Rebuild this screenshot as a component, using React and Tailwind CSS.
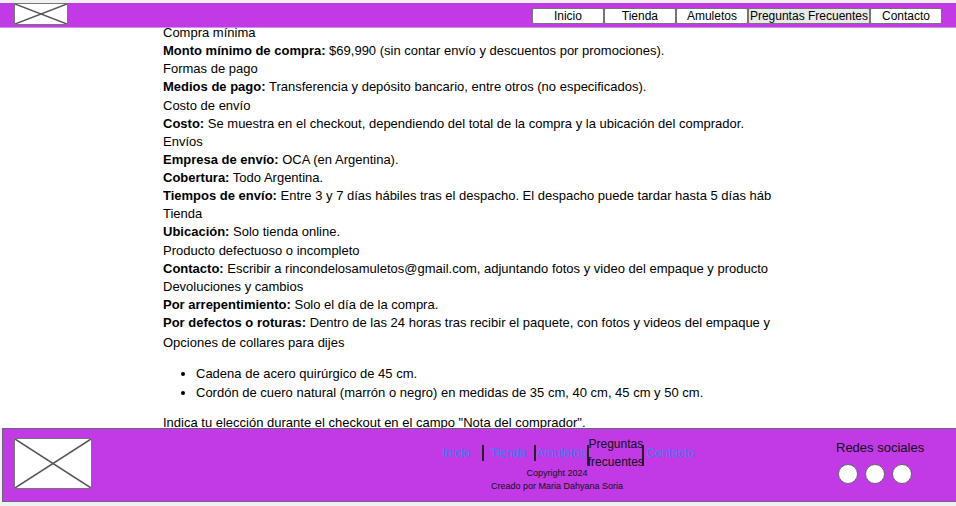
import React from "react";

const LogoBox = ({ className }) => (
  <div className={`bg-white border border-[#777] shrink-0 ${className}`}>
    <svg width="100%" height="100%" preserveAspectRatio="none" viewBox="0 0 100 100">
      <line x1="0" y1="0" x2="100" y2="100" stroke="#555" strokeWidth="1.5" vectorEffect="non-scaling-stroke" />
      <line x1="100" y1="0" x2="0" y2="100" stroke="#555" strokeWidth="1.5" vectorEffect="non-scaling-stroke" />
    </svg>
  </div>
);

const navItems = ["Inicio", "Tienda", "Amuletos", "Preguntas Frecuentes", "Contacto"];

const rows = [
  { t: "Compra mínima" },
  { b: "Monto mínimo de compra:", t: " $69,990 (sin contar envío y descuentos por promociones)." },
  { t: "Formas de pago" },
  { b: "Medios de pago:", t: " Transferencia y depósito bancario, entre otros (no especificados)." },
  { t: "Costo de envío" },
  { b: "Costo:", t: " Se muestra en el checkout, dependiendo del total de la compra y la ubicación del comprador." },
  { t: "Envíos" },
  { b: "Empresa de envío:", t: " OCA (en Argentina)." },
  { b: "Cobertura:", t: " Todo Argentina." },
  { b: "Tiempos de envío:", t: " Entre 3 y 7 días hábiles tras el despacho. El despacho puede tardar hasta 5 días háb" },
  { t: "Tienda" },
  { b: "Ubicación:", t: " Solo tienda online." },
  { t: "Producto defectuoso o incompleto" },
  { b: "Contacto:", t: " Escribir a rincondelosamuletos@gmail.com, adjuntando fotos y video del empaque y producto" },
  { t: "Devoluciones y cambios" },
  { b: "Por arrepentimiento:", t: " Solo el día de la compra." },
  { b: "Por defectos o roturas:", t: " Dentro de las 24 horas tras recibir el paquete, con fotos y videos del empaque y" },
];

export default function App() {
  return (
    <div className="h-[506px] w-[956px] overflow-hidden bg-[#f0f1f3] pt-[3px] flex flex-col font-['Liberation_Sans',Arial,sans-serif] text-black">
      <header className="h-[25px] shrink-0 bg-[#c13ae6] border-b border-[#d48eec] flex items-start justify-between">
        <LogoBox className="ml-[14px] w-[54px] h-[22px]" />
        <nav className="flex mt-[5px] mr-[14px]">
          {navItems.map((item) => (
            <button
              key={item}
              className={`h-[16px] border border-[#767676] rounded-[2px] text-[12px] leading-[14px] text-black ${
                item === "Preguntas Frecuentes" ? "bg-[#e9e9e9] px-[1px]" : "bg-white w-[72px]"
              }`}
            >
              {item}
            </button>
          ))}
        </nav>
      </header>

      <main className="flex-1 bg-white overflow-hidden">
        <div className="ml-[163px] w-[608px] mt-[-4px] overflow-hidden whitespace-nowrap text-[13px]">
          {rows.map((r, i) => (
            <p key={i} className="leading-[18.13px]">
              {r.b && <strong className="font-bold">{r.b}</strong>}
              {r.t}
            </p>
          ))}
          <p className="leading-[18px] mt-[2px]">Opciones de collares para dijes</p>
          <ul className="list-disc pl-[33px] mt-[12px] mb-[12px] leading-[19px]">
            <li>Cadena de acero quirúrgico de 45 cm.</li>
            <li>Cordón de cuero natural (marrón o negro) en medidas de 35 cm, 40 cm, 45 cm y 50 cm.</li>
          </ul>
          <p className="leading-[18px]">Indica tu elección durante el checkout en el campo "Nota del comprador".</p>
        </div>
      </main>

      <footer className="h-[74px] shrink-0 ml-[2px] w-[960px] bg-[#c13ae6] border border-[#6f6477] flex items-start">
        <LogoBox className="ml-[11px] mt-[9px] w-[78px] h-[51px]" />

        <div className="ml-[345px] mt-[9px] w-[240px] shrink-0 flex flex-col">
          <div className="h-[29px] flex items-center pl-[5px] text-[12px] whitespace-nowrap">
            <a className="shrink-0 text-[#3b7ff5]">Inicio</a>
            <span className="shrink-0 ml-[12px] w-[2px] h-[16px] bg-[#222]" />
            <a className="shrink-0 ml-[6px] text-[#3b7ff5]">Tienda</a>
            <span className="shrink-0 ml-[8px] w-[2px] h-[16px] bg-[#222]" />
            <a className="shrink-0 text-[#3b7ff5]">Amuletos</a>
            <span className="shrink-0 ml-[1px] mt-[6px] h-[21px] w-[57px] border-x-2 border-[#222] flex flex-col justify-center items-center leading-[18px] text-[#111]">
              <span className="block mt-[-6px]">Preguntas</span>
              <span className="block">frecuentes</span>
            </span>
            <a className="shrink-0 ml-[2px] text-[#3b7ff5]">Contacto</a>
          </div>
          <div className="text-center text-[9px] leading-[13px] text-[#111]">
            <p>Copyright 2024</p>
            <p>Creado por Maria Dahyana Soria</p>
          </div>
        </div>

        <div className="ml-[159px] mt-[11px] flex flex-col items-start">
          <p className="text-[13px] leading-[16px] text-[#111]">Redes sociales</p>
          <div className="flex gap-[7px] ml-[2px] mt-[8px]">
            <span className="w-[20px] h-[20px] rounded-full bg-white border border-[#666]" />
            <span className="w-[20px] h-[20px] rounded-full bg-white border border-[#666]" />
            <span className="w-[20px] h-[20px] rounded-full bg-white border border-[#666]" />
          </div>
        </div>
      </footer>
      <div className="h-[4px] shrink-0" />
    </div>
  );
}
